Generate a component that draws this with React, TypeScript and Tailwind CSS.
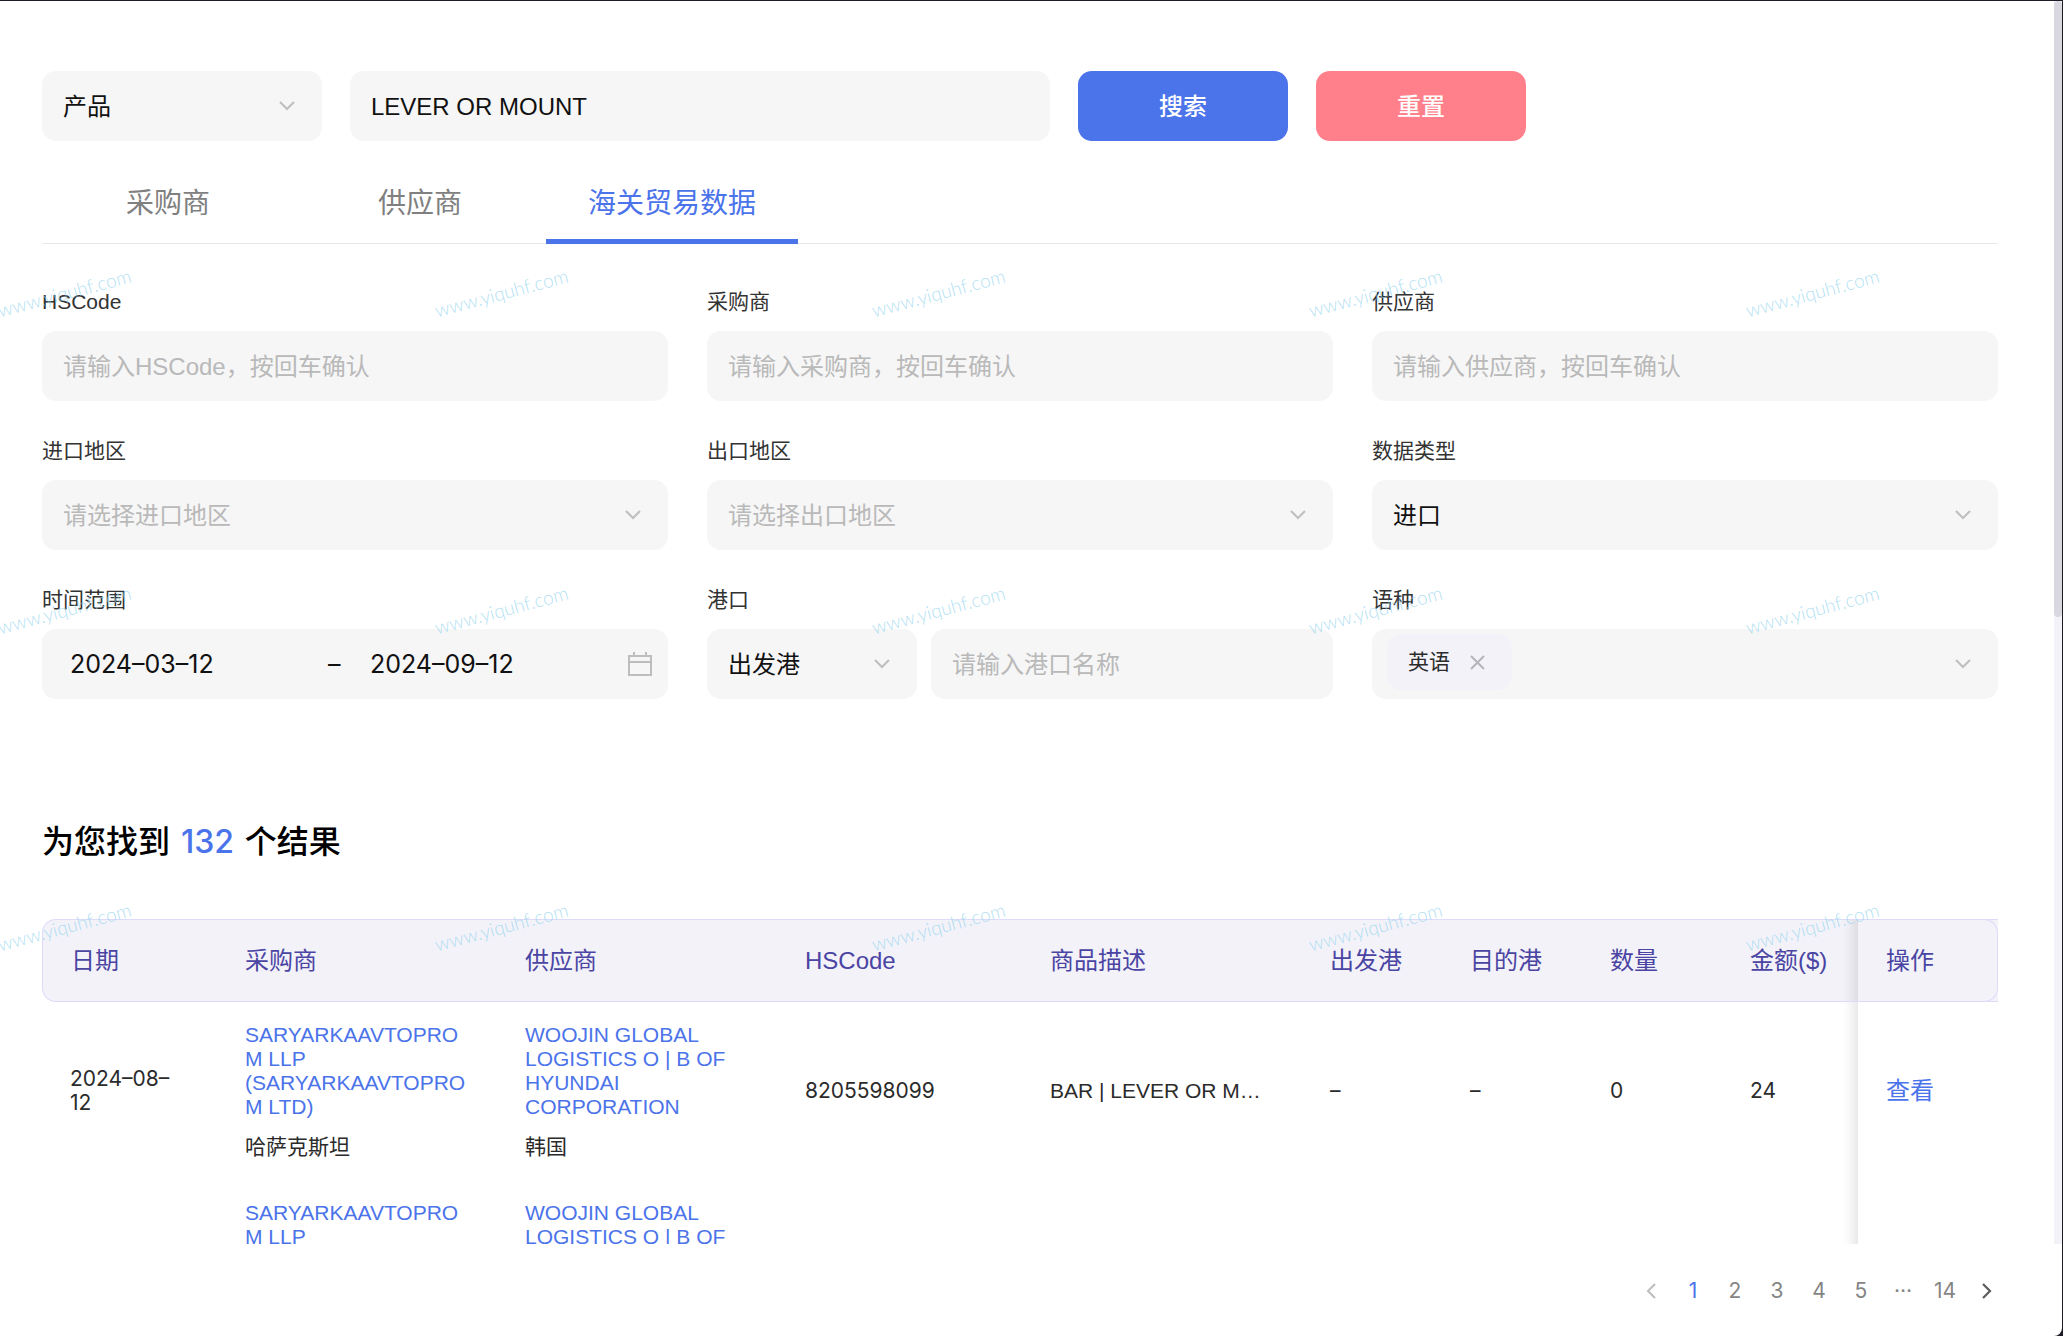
import { useState, type ReactNode } from 'react'
import { clsx } from 'clsx'

type Row = {
  date: string
  buyer: string
  buyerCountry: string
  supplier: string
  supplierCountry: string
  hsCode: string
  description: string
  from: string
  to: string
  quantity: string
  amount: string
}

const TABS = ['采购商', '供应商', '海关贸易数据']

const ROW: Row = {
  date: '2024–08–12',
  buyer: 'SARYARKAAVTOPROM LLP (SARYARKAAVTOPROM LTD)',
  buyerCountry: '哈萨克斯坦',
  supplier: 'WOOJIN GLOBAL LOGISTICS O | B OF HYUNDAI CORPORATION',
  supplierCountry: '韩国',
  hsCode: '8205598099',
  description: 'BAR | LEVER OR MOUNT',
  from: '–',
  to: '–',
  quantity: '0',
  amount: '24',
}

const ROWS: Row[] = [ROW, ROW]

const HEADERS = ['日期', '采购商', '供应商', 'HSCode', '商品描述', '出发港', '目的港', '数量', '金额($)']

const PAGES = ['1', '2', '3', '4', '5', '···', '14']

const fieldClass = 'block h-[70px] w-full rounded-[14px] bg-[#f6f6f6] text-[24px] outline-none'

function ChevronDown() {
  return (
    <svg
      className="pointer-events-none absolute right-[27px] top-1/2 -translate-y-1/2"
      width="16"
      height="10"
      viewBox="0 0 16 10"
      fill="none"
      stroke="#c0c0c0"
      strokeWidth="2.200"
    >
      <path d="M1 1l7 7 7-7" />
    </svg>
  )
}

function CalendarIcon() {
  return (
    <svg width="24" height="24" viewBox="0 0 24 24" fill="none" stroke="#bdbdbd" strokeWidth="2">
      <path d="M1 4h22v19H1zM1 10h22M6 0v4M18 0v4" />
    </svg>
  )
}

function Field({ id, label, children }: { id: string; label: string; children: ReactNode }) {
  return (
    <div className="min-w-0">
      <label htmlFor={id} className="mb-[13px] block text-[21px] leading-8 text-[#333]">
        {label}
      </label>
      {children}
    </div>
  )
}

function TextField({ id, placeholder, label }: { id: string; placeholder: string; label?: string }) {
  return (
    <input
      id={id}
      type="text"
      aria-label={label}
      placeholder={placeholder}
      className={clsx(fieldClass, 'px-[21px] pt-0.5 text-[#111] placeholder:text-[#b9b9b9]')}
    />
  )
}

function SelectField({ id, option, muted, label }: { id: string; option: string; muted?: boolean; label?: string }) {
  return (
    <div className="relative">
      <select
        id={id}
        aria-label={label}
        className={clsx(fieldClass, 'appearance-none px-[21px] pt-0.5', muted ? 'text-[#b9b9b9]' : 'text-[#111]')}
      >
        <option>{option}</option>
      </select>
      <ChevronDown />
    </div>
  )
}

// Diagonal site mark repeated over the whole page
function Watermark() {
  return (
    <div className="pointer-events-none absolute inset-0 overflow-hidden" aria-hidden="true">
      <div className="-ml-[154px] mt-[134px] grid w-max grid-cols-[repeat(5,437px)] auto-rows-[317px]">
        {Array.from({ length: 15 }, (_, i) => (
          <div key={i} className="flex items-center justify-center">
            <span className="-rotate-15 font-['Lato'] text-[19px] font-light text-[#8fd3ee]/70">www.yiquhf.com</span>
          </div>
        ))}
      </div>
    </div>
  )
}

function Company({ name, country }: { name: string; country: string }) {
  return (
    <>
      <a href="#" className="block text-[#4b73ea] wrap-break-word">
        {name}
      </a>
      <div className="mt-4">{country}</div>
    </>
  )
}

function ResultsTable() {
  const edge = 'shadow-[inset_-18px_0_14px_-14px_rgba(0,0,0,0.12)]'
  return (
    <table className="w-full table-fixed border-separate border-spacing-0 text-left">
      <colgroup>
        <col className="w-[175px]" />
        <col className="w-[280px]" />
        <col className="w-[280px]" />
        <col className="w-[245px]" />
        <col className="w-[280px]" />
        <col className="w-[140px]" />
        <col className="w-[140px]" />
        <col className="w-[140px]" />
        <col />
        <col className="w-[140px]" />
      </colgroup>
      <thead className="text-[24px] text-[#4a44a3]">
        <tr className="h-[83px]">
          {HEADERS.map((title, i) => (
            <th
              key={title}
              className={clsx(
                'border-y border-[#dddafa] bg-[#f3f2f9] pl-7 font-normal whitespace-nowrap',
                i === 0 && 'rounded-l-[14px] border-l',
                i === HEADERS.length - 1 && edge,
              )}
            >
              {title}
            </th>
          ))}
          <th className="bg-[#f3f2f9] p-0 font-normal shadow-[inset_0_1px_0_#dddafa,inset_0_-1px_0_#dddafa]">
            <div className="flex h-[83px] items-center rounded-r-[14px] border-y border-r border-[#dddafa] pl-7">
              操作
            </div>
          </th>
        </tr>
      </thead>
      <tbody className="text-[21px] leading-6 text-[#2b2b2b]">
        {ROWS.map((row, i) => (
          <tr key={i} className="h-[178px]">
            <td className="px-7 font-['Inter']">{row.date}</td>
            <td className="px-7">
              <Company name={row.buyer} country={row.buyerCountry} />
            </td>
            <td className="px-7">
              <Company name={row.supplier} country={row.supplierCountry} />
            </td>
            <td className="px-7 font-['Inter']">{row.hsCode}</td>
            <td className="truncate px-7">{row.description}</td>
            <td className="px-7 font-['Inter']">{row.from}</td>
            <td className="px-7 font-['Inter']">{row.to}</td>
            <td className="px-7 font-['Inter']">{row.quantity}</td>
            <td className={clsx("px-7 font-['Inter']", edge)}>{row.amount}</td>
            <td className="px-7 text-[24px]">
              <a href="#" className="text-[#4b73ea]">
                查看
              </a>
            </td>
          </tr>
        ))}
      </tbody>
    </table>
  )
}

function Pagination() {
  const [page, setPage] = useState('1')
  return (
    <nav className="flex h-[92px] shrink-0 items-center justify-end pt-0.5 pr-[54px] font-['Inter'] text-[21px] text-[#858585]">
      <button type="button" aria-label="上一页" className="flex h-10 w-[42px] items-center justify-center">
        <svg width="10" height="16" viewBox="0 0 10 16" fill="none" stroke="#bdbdbd" strokeWidth="2">
          <path d="M9 1L2 8l7 7" />
        </svg>
      </button>
      {PAGES.map((item) => (
        <button
          key={item}
          type="button"
          onClick={() => setPage(item)}
          className={clsx('h-10 w-[42px]', item === page && 'text-[#4b73ea]')}
        >
          {item}
        </button>
      ))}
      <button type="button" aria-label="下一页" className="flex h-10 w-[42px] items-center justify-center">
        <svg width="10" height="16" viewBox="0 0 10 16" fill="none" stroke="#5c5c5c" strokeWidth="2.200">
          <path d="M1 1l7 7-7 7" />
        </svg>
      </button>
    </nav>
  )
}

export default function App() {
  const [tab, setTab] = useState(TABS[2])
  const [keyword, setKeyword] = useState('LEVER OR MOUNT')
  const [start, setStart] = useState('2024–03–12')
  const [end, setEnd] = useState('2024–09–12')

  return (
    <div className="h-screen bg-[#1d1b26] pt-px pr-px font-['Liberation_Sans','Noto_Sans_CJK_SC',sans-serif]">
      <div className="relative flex h-full flex-col overflow-hidden rounded-br-[8px] bg-white">
        <div className="flex min-h-0 flex-1 overflow-hidden">
          <main className="min-w-0 flex-1 overflow-hidden pt-[70px] pr-14 pl-[42px]">
            {/* Search bar */}
            <form className="flex gap-7" onSubmit={(e) => e.preventDefault()}>
              <div className="w-[280px]">
                <SelectField id="kind" option="产品" label="类型" />
              </div>
              <input
                type="text"
                aria-label="关键词"
                value={keyword}
                onChange={(e) => setKeyword(e.target.value)}
                className={clsx(fieldClass, 'max-w-[700px] px-[21px] pt-0.5 text-[#111]')}
              />
              <button
                type="submit"
                className="w-[210px] rounded-[14px] bg-[#4b73ea] pt-0.5 text-[24px] font-medium text-white"
              >
                搜索
              </button>
              <button
                type="button"
                onClick={() => setKeyword('')}
                className="w-[210px] rounded-[14px] bg-[#ff808b] pt-0.5 text-[24px] font-medium text-white"
              >
                重置
              </button>
            </form>

            {/* Tabs */}
            <div className="mt-5 flex border-b border-[#e9e9ea]">
              {TABS.map((name) => (
                <button
                  key={name}
                  type="button"
                  onClick={() => setTab(name)}
                  className={clsx(
                    '-mb-px h-[83px] w-[252px] border-b-5 pt-[7px] text-[28px]',
                    name === tab ? 'border-[#4b73ea] text-[#4b73ea]' : 'border-transparent text-[#808080]',
                  )}
                >
                  {name}
                </button>
              ))}
            </div>

            {/* Filters */}
            <div className="mt-[42px] grid grid-cols-3 gap-x-[39px] gap-y-[34px]">
              <Field id="hscode" label="HSCode">
                <TextField id="hscode" placeholder="请输入HSCode，按回车确认" />
              </Field>
              <Field id="buyer" label="采购商">
                <TextField id="buyer" placeholder="请输入采购商，按回车确认" />
              </Field>
              <Field id="supplier" label="供应商">
                <TextField id="supplier" placeholder="请输入供应商，按回车确认" />
              </Field>
              <Field id="import-area" label="进口地区">
                <SelectField id="import-area" option="请选择进口地区" muted />
              </Field>
              <Field id="export-area" label="出口地区">
                <SelectField id="export-area" option="请选择出口地区" muted />
              </Field>
              <Field id="data-type" label="数据类型">
                <SelectField id="data-type" option="进口" />
              </Field>
              <Field id="date-start" label="时间范围">
                <div className="flex h-[70px] items-center rounded-[14px] bg-[#f6f6f6] pr-4 pl-7 font-['Inter'] text-[25px] text-[#111]">
                  <input
                    id="date-start"
                    type="text"
                    value={start}
                    onChange={(e) => setStart(e.target.value)}
                    className="w-[250px] min-w-0 pt-0.5 outline-none"
                  />
                  <span className="w-[50px] pt-0.5 pl-2">–</span>
                  <input
                    type="text"
                    aria-label="结束日期"
                    value={end}
                    onChange={(e) => setEnd(e.target.value)}
                    className="min-w-0 flex-1 pt-0.5 outline-none"
                  />
                  <CalendarIcon />
                </div>
              </Field>
              <Field id="port-kind" label="港口">
                <div className="flex gap-3.5">
                  <div className="w-[210px] shrink-0">
                    <SelectField id="port-kind" option="出发港" />
                  </div>
                  <TextField id="port-name" label="港口名称" placeholder="请输入港口名称" />
                </div>
              </Field>
              <Field id="language" label="语种">
                <div className="relative flex h-[70px] items-start rounded-[14px] bg-[#f6f6f6] py-[5px] pl-[15px]">
                  <span className="flex h-14 shrink-0 items-center gap-5 rounded-[14px] bg-[#f3f2f9] px-[21px] text-[21px] text-[#2b2b2b]">
                    英语
                    <button type="button" aria-label="移除英语" className="pr-1.5">
                      <svg width="15" height="15" viewBox="0 0 15 15" fill="none" stroke="#b5b5b8" strokeWidth="2">
                        <path d="M1 1l13 13M14 1L1 14" />
                      </svg>
                    </button>
                  </span>
                  <input id="language" type="text" className="h-full min-w-0 flex-1 outline-none" />
                  <ChevronDown />
                </div>
              </Field>
            </div>

            {/* Results */}
            <h2 className="mt-[120px] mb-[54px] text-[32px] leading-[46px] font-medium text-black">
              为您找到 <span className="mx-0.5 font-['Inter'] text-[#4b73ea]">132</span> 个结果
            </h2>
            <ResultsTable />
          </main>
          <div className="w-2 shrink-0 bg-[#f3f2f9]">
            <div className="h-[616px] rounded-[4px] bg-[#d9d8e0]" />
          </div>
        </div>
        <Pagination />
        <Watermark />
      </div>
    </div>
  )
}
